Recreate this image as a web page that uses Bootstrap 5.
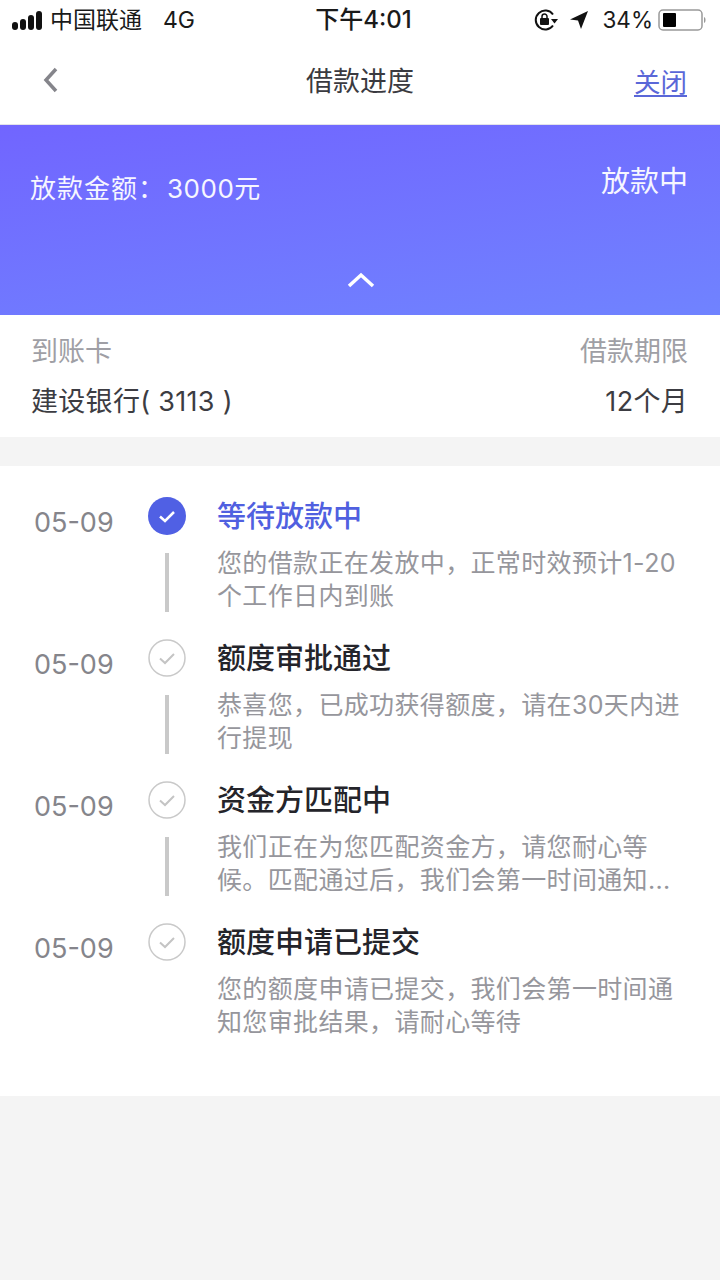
<!DOCTYPE html>
<html lang="zh">
<head>
<meta charset="utf-8">
<title>借款进度</title>
<link href="https://cdn.jsdelivr.net/npm/bootstrap@5.3.0/dist/css/bootstrap.min.css" rel="stylesheet">
<style>
html,body{height:100%}
body{width:720px;height:1280px;background:#f4f4f4;font-family:"Inter","Noto Sans CJK SC",sans-serif;overflow:hidden;color:#26262c}
.sbar{height:40px;padding:0 12px;font-size:23px;color:#1a1a1a;background:#fff;position:relative}
.sbar-time{position:absolute;left:0;right:0;top:0;height:40px;line-height:40px;text-align:center;font-weight:500;font-size:24px;padding-left:7px}
.sig{display:flex;align-items:flex-end;gap:2px;margin-right:8px;height:20px}
.sig i{display:block;width:6px;background:#111;border-radius:3px}
.sig .s1{height:8px}.sig .s2{height:11px}.sig .s3{height:15px}.sig .s4{height:19px}
.sb-net{margin-left:21px}
.sb-lock{margin-right:11px}
.sb-arrow{margin-right:13px}
.sb-pct{margin-right:5px;font-size:22.500px}
.topnav{height:85px;background:#fff;border-bottom:1px solid #e2e2ea;padding:0 33px 0 41px;position:relative}
.topnav-title{position:absolute;left:0;right:0;top:22px;text-align:center;font-size:27px;line-height:40px;color:#3a3a40}
.close-link{font-size:26.500px;color:#5a67d8;text-decoration:underline;text-underline-offset:3px;line-height:40px;margin-top:22px}
.back-ic{margin-top:26px}
.hero{height:190px;background:linear-gradient(172deg,#7165ff 0%,#7083ff 100%);color:#fff;padding:0 32px 0 30px;position:relative}
.hero-amt{font-size:26px;letter-spacing:1px;line-height:40px;padding-top:44px;color:#f6f6ff}
.hero-num{margin-left:2px;letter-spacing:.5px}
.hero-st{font-size:29px;line-height:40px;padding-top:37px;color:#f6f6ff}
.hero-up{position:absolute;left:347px;top:147px}
.infobox{height:122px;background:#fff;padding:17px 32px 0 31px;margin-bottom:29px}
.lbl{font-size:27px;color:#9f9fa5;line-height:40px}
.val{font-size:27px;letter-spacing:.3px;color:#3c3c42;line-height:40px;margin-top:10px}
.tl{height:630px;background:#fff;padding-top:31px}
.tl-row{height:142px;display:flex}
.tl-date{width:148px;padding-left:34px;font-size:27px;color:#85858b;line-height:40px;padding-top:6px;flex:none}
.tl-mid{width:38px;flex:none;margin-right:31px;display:flex;flex-direction:column;align-items:center}
.tl-bar{width:4px;height:59px;background:#c9c9c9;margin-top:18px}
.tl-main{width:480px;flex:none}
.tl-h{font-size:29px;font-weight:500;line-height:38px;color:#24242a;padding-top:1px;margin-bottom:-1px}
.tl-h.on{color:#5060e0}
.tl-p{font-size:25px;letter-spacing:.35px;line-height:33px;color:#96969c;margin:12px 0 0;white-space:nowrap}
</style>
</head>
<body>
<div class="sbar d-flex align-items-center">
  <div class="sig"><i class="s1"></i><i class="s2"></i><i class="s3"></i><i class="s4"></i></div>
  <span>中国联通</span><span class="sb-net">4G</span>
  <div class="sbar-time">下午4:01</div>
  <div class="ms-auto d-flex align-items-center">
    <svg class="sb-lock" width="24" height="24" viewBox="0 0 24 24"><path d="M19 6.500A9.500 9.500 0 1 0 19 17.500" fill="none" stroke="#111" stroke-width="2"/><path d="M17 11h7l-3.500 4.500z" fill="#111"/><rect x="6" y="10" width="9" height="7" rx="1" fill="#111"/><path d="M8 10V8.500a2.500 2.500 0 0 1 5 0V10" fill="none" stroke="#111" stroke-width="1.500"/></svg>
    <svg class="sb-arrow" width="20" height="20" viewBox="0 0 20 20"><path d="M19 1 1 9.500l8 1 3 8.500z" fill="#111"/></svg>
    <span class="sb-pct">34%</span>
    <svg width="50" height="24" viewBox="0 0 50 24"><rect x="1" y="2" width="43" height="20" rx="4" fill="none" stroke="#999" stroke-width="1.500"/><rect x="5" y="5" width="13" height="14" rx="1" fill="#000"/><path d="M46 9c2 .5 2 5.500 0 6z" fill="#999"/></svg>
  </div>
</div>
<div class="topnav d-flex justify-content-between align-items-start">
  <svg class="back-ic" width="18" height="28" viewBox="0 0 18 28"><path d="M15 3 5 14l10 11" fill="none" stroke="#85858b" stroke-width="3.500"/></svg>
  <div class="topnav-title">借款进度</div>
  <a class="close-link" href="#">关闭</a>
</div>
<div class="hero d-flex justify-content-between align-items-start">
  <div class="hero-amt">放款金额：<span class="hero-num">3000</span>元</div>
  <div class="hero-st">放款中</div>
  <svg class="hero-up" width="28" height="16" viewBox="0 0 28 16"><path d="M2 14 14 3l12 11" fill="none" stroke="#fff" stroke-width="3.500"/></svg>
</div>
<div class="infobox">
  <div class="d-flex justify-content-between"><span class="lbl">到账卡</span><span class="lbl">借款期限</span></div>
  <div class="d-flex justify-content-between"><span class="val">建设银行( 3113 )</span><span class="val">12个月</span></div>
</div>
<div class="tl">
  <div class="tl-row">
    <div class="tl-date">05-09</div>
    <div class="tl-mid">
      <svg width="38" height="38" viewBox="0 0 38 38"><circle cx="19" cy="19" r="19" fill="#5060e4"/><path d="M12 19.500l5 4.500 9-9" fill="none" stroke="#fff" stroke-width="2.500"/></svg>
      <div class="tl-bar"></div>
    </div>
    <div class="tl-main"><div class="tl-h on">等待放款中</div><p class="tl-p">您的借款正在发放中，正常时效预计1-20<br>个工作日内到账</p></div>
  </div>
  <div class="tl-row">
    <div class="tl-date">05-09</div>
    <div class="tl-mid">
      <svg width="38" height="38" viewBox="0 0 38 38"><circle cx="19" cy="19" r="18" fill="none" stroke="#c9c9c9" stroke-width="1.500"/><path d="M12 19.500l5 4.500 9-9" fill="none" stroke="#c4c4c4" stroke-width="2"/></svg>
      <div class="tl-bar"></div>
    </div>
    <div class="tl-main"><div class="tl-h">额度审批通过</div><p class="tl-p">恭喜您，已成功获得额度，请在30天内进<br>行提现</p></div>
  </div>
  <div class="tl-row">
    <div class="tl-date">05-09</div>
    <div class="tl-mid">
      <svg width="38" height="38" viewBox="0 0 38 38"><circle cx="19" cy="19" r="18" fill="none" stroke="#c9c9c9" stroke-width="1.500"/><path d="M12 19.500l5 4.500 9-9" fill="none" stroke="#c4c4c4" stroke-width="2"/></svg>
      <div class="tl-bar"></div>
    </div>
    <div class="tl-main"><div class="tl-h">资金方匹配中</div><p class="tl-p">我们正在为您匹配资金方，请您耐心等<br>候。匹配通过后，我们会第一时间通知...</p></div>
  </div>
  <div class="tl-row">
    <div class="tl-date">05-09</div>
    <div class="tl-mid">
      <svg width="38" height="38" viewBox="0 0 38 38"><circle cx="19" cy="19" r="18" fill="none" stroke="#c9c9c9" stroke-width="1.500"/><path d="M12 19.500l5 4.500 9-9" fill="none" stroke="#c4c4c4" stroke-width="2"/></svg>
    </div>
    <div class="tl-main"><div class="tl-h">额度申请已提交</div><p class="tl-p">您的额度申请已提交，我们会第一时间通<br>知您审批结果，请耐心等待</p></div>
  </div>
</div>
<script src="https://cdn.jsdelivr.net/npm/bootstrap@5.3.0/dist/js/bootstrap.bundle.min.js"></script>
</body>
</html>
